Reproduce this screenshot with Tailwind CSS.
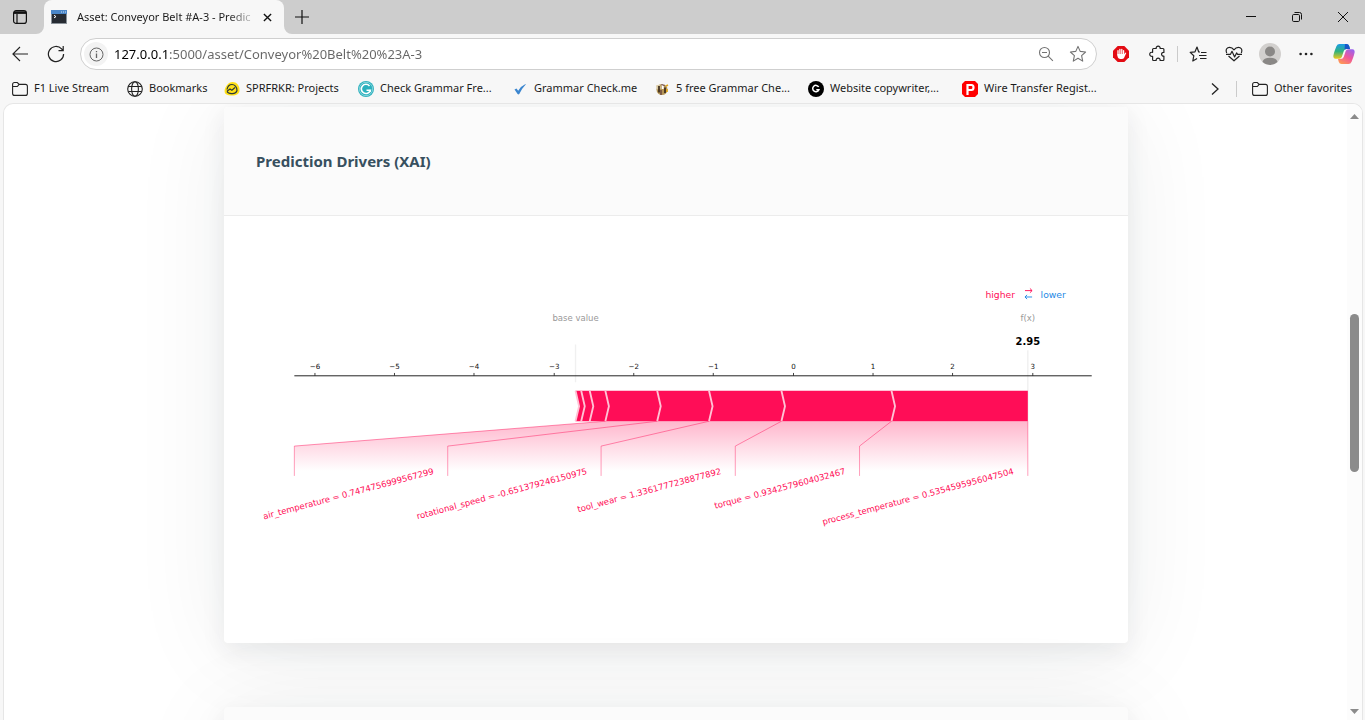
<!DOCTYPE html>
<html lang="en">
<head>
<meta charset="utf-8">
<meta name="viewport" content="width=device-width, initial-scale=1">
<title>Asset: Conveyor Belt #A-3</title>
<script src="https://cdn.jsdelivr.net/npm/@tailwindcss/browser@4"></script>
</head>
<body class="flex h-screen flex-col overflow-hidden bg-[#f7f7f7] font-['Noto_Sans','Open_Sans',sans-serif] text-[11px] text-[#1b1b1b]">

<!-- Tab strip -->
<header class="flex h-[34px] shrink-0 items-stretch bg-[#cdcdcd]">
  <button aria-label="Tab actions" class="flex w-[44px] items-center rounded-br-lg pl-3">
    <svg class="size-4" viewBox="0 0 16 16" fill="none" stroke="#111" stroke-width="1.2"><rect x="1.6" y="1.6" width="12.8" height="12.8" rx="2.5"/><path d="M2 3.600h12" stroke-width="2.600"/><path d="M5 5v9"/></svg>
  </button>
  <div class="relative flex w-[240px] items-center rounded-t-lg bg-[#f7f7f7] pr-[5px] pl-[7px]">
    <svg class="absolute bottom-0 -left-2 size-2" viewBox="0 0 8 8"><path d="M8 0v8H0a8 8 0 0 0 8-8z" fill="#f7f7f7"/></svg>
    <svg class="absolute -right-2 bottom-0 size-2" viewBox="0 0 8 8"><path d="M0 0v8h8a8 8 0 0 1-8-8z" fill="#f7f7f7"/></svg>
    <svg class="size-4 shrink-0" viewBox="0 0 16 16"><rect y="1" width="16" height="14" rx=".6" fill="#8a9299"/><rect y="1" width="16" height="4" fill="#4a86c8"/><path d="M10 3h1M12 3h1M14 3h1" stroke="#cfe0f2"/><rect x="1" y="5" width="14" height="9" fill="#272c33"/><path d="M3 6.300l2 1.300-2 1.300" fill="none" stroke="#fff"/></svg>
    <span class="ml-[10px] w-[178px] overflow-hidden bg-linear-to-r from-[#1b1b1b] from-85% to-[#1b1b1b]/10 bg-clip-text whitespace-nowrap text-transparent">Asset: Conveyor Belt #A-3 - Predic</span>
    <button aria-label="Close tab" class="ml-auto flex size-6 items-center justify-center"><svg class="size-[9px]" viewBox="0 0 10 10" stroke="#111" stroke-width="1.500"><path d="M1 1l8 8M9 1L1 9"/></svg></button>
  </div>
  <button aria-label="New tab" class="flex w-9 items-center justify-center"><svg class="size-4" viewBox="0 0 16 16" stroke="#111" stroke-width="1.2"><path d="M8 1v14M1 8h14"/></svg></button>
  <div class="-mr-px ml-auto flex">
    <button aria-label="Minimize" class="flex w-[46px] items-center justify-center"><svg class="size-[10px]" viewBox="0 0 10 10" stroke="#111"><path d="M0 4.500h10"/></svg></button>
    <button aria-label="Restore" class="flex w-[46px] items-center justify-center"><svg class="size-[10px]" viewBox="0 0 10 10" fill="none" stroke="#111"><rect x=".5" y="2.500" width="7" height="7" rx="1.200"/><path d="M2.500.5h5a2 2 0 0 1 2 2v5"/></svg></button>
    <button aria-label="Close" class="flex w-[46px] items-center justify-center"><svg class="size-[10px]" viewBox="0 0 10 10" stroke="#111"><path d="M0 0l10 10M10 0L0 10"/></svg></button>
  </div>
</header>

<!-- Address bar -->
<nav aria-label="Toolbar" class="flex h-[40px] shrink-0 items-center pr-[3px] pl-[2px]">
  <button aria-label="Back" class="flex w-9 justify-center"><svg class="size-4" viewBox="0 0 16 16" fill="none" stroke="#222" stroke-width="1.1"><path d="M16 8H1M8 1L.9 8 8 15"/></svg></button>
  <button aria-label="Refresh" class="flex w-9 justify-center"><svg class="size-[18px]" viewBox="0 0 18 18" fill="none" stroke="#222" stroke-width="1.2"><path d="M16.600 9A7.600 7.600 0 1 1 14.600 3.900L16 5.500M16.200 1v4.700h-4.700"/></svg></button>
  <div class="ml-[6px] flex h-8 flex-1 items-center rounded-full border border-[#cfcfcf] bg-white px-[3px]">
    <button aria-label="Site information" class="flex size-6 items-center justify-center rounded-full bg-[#f3f3f3]"><svg class="size-[15px]" viewBox="0 0 15 15" fill="none" stroke="#666"><circle cx="7.500" cy="7.500" r="6.500"/><path d="M7.500 6.500v4.500M7.500 4v1.300" stroke-width="1.300"/></svg></button>
    <label for="url" class="flex flex-1 pl-[6px]"><span class="hidden">Address</span>
      <input id="url" aria-label="Address" value="127.0.0.1:5000/asset/Conveyor%20Belt%20%23A-3" class="h-6 w-full bg-linear-to-r from-black from-[54px] to-[#666] to-[54px] bg-clip-text text-[13px] text-transparent outline-none">
    </label>
    <button aria-label="Zoom" class="flex w-7 justify-center"><svg class="size-4" viewBox="0 0 16 16" fill="none" stroke="#737373" stroke-width="1.1"><circle cx="6.500" cy="6.500" r="5"/><path d="M10.200 10.200l4.700 4.700M4 6.500h5"/></svg></button>
    <button aria-label="Add to favorites" class="-mr-[3px] flex w-9 justify-center"><svg class="size-[18px]" viewBox="0 0 18 18" fill="none" stroke="#737373" stroke-width="1.1" stroke-linejoin="round"><path d="M9 1.400l2.200 5 5.400.6-4 3.600 1.100 5.500L9 13.300l-4.700 2.800 1.100-5.500-4-3.600 5.400-.6z"/></svg></button>
  </div>
  <button aria-label="Ad blocker" class="ml-[6px] flex w-9 justify-center"><svg class="size-4" viewBox="0 0 16 16"><path d="M4.700 0h6.600L16 4.700v6.600L11.300 16H4.700L0 11.300V4.700z" fill="#e30b13"/><path d="M5 9V4.700M6.900 8V3.400M8.800 8V3.400M10.600 9V4.700" stroke="#fff" stroke-width="1.300" stroke-linecap="round"/><path d="M4.400 8h6.900l1.100-1.600.9.500L11 12c-.8 1.300-4.700 1.400-5.700 0C4.500 11 4.400 9.500 4.400 8z" fill="#fff"/></svg></button>
  <button aria-label="Extensions" class="flex w-9 justify-center"><svg class="size-[18px]" viewBox="0 0 18 18" fill="none" stroke="#222" stroke-width="1.2" stroke-linejoin="round"><path d="M5.500 3.500h2.700a2 2 0 1 1 3.900 0h2.900q.9 0 .9.900v3a1.900 1.900 0 1 0 0 3.700v3.500q0 .9-.9.900h-2.900a2 2 0 1 0-3.900 0H5.500q-.9 0-.9-.9v-3.300a2.100 2.100 0 1 1 0-3.900v-3q0-.9.900-.9z"/></svg></button>
  <span class="mx-[2px] h-4 w-px bg-[#cbcbcb]"></span>
  <button aria-label="Favorites" class="flex w-9 justify-center"><svg class="size-[18px]" viewBox="0 0 18 18" fill="none" stroke="#222" stroke-width="1.2" stroke-linejoin="round"><path d="M11 7H9.700L8 2 6 6.800l-4.800.6 3.600 3.400-1 5.200 4.300-2.500M12 7.500h5.500M10 10.500h7.500M11 13.500h6.500"/></svg></button>
  <button aria-label="Browser essentials" class="flex w-9 justify-center"><svg class="size-[18px]" viewBox="0 0 18 18" fill="none" stroke="#222" stroke-width="1.200" stroke-linejoin="round"><path d="M1.700 8C.2 4.300 2.200 2.300 4.600 2.300c2 0 3.300 1 4.400 2.500 1.100-1.500 2.400-2.500 4.400-2.500 2.400 0 4.400 2 2.900 5.700M3.500 11L9 15.800 14.500 11"/><path d="M1 9.300h4.500L7 6.300l2.600 5.600 2-4 1 1.400H17"/></svg></button>
  <button aria-label="Profile" class="flex w-9 justify-center"><svg class="size-[22px]" viewBox="0 0 22 22"><circle cx="11" cy="11" r="11" fill="#d2d0ce"/><circle cx="11" cy="8.500" r="5" fill="#8a8886"/><path d="M3.500 19a7.600 5 0 0 1 15 0A11 11 0 0 1 3.500 19z" fill="#8a8886"/></svg></button>
  <button aria-label="Settings and more" class="flex w-9 justify-center"><svg class="h-1 w-[14px]" viewBox="0 0 14 4" fill="#222"><circle cx="1.600" cy="2" r="1.300"/><circle cx="7" cy="2" r="1.300"/><circle cx="12.400" cy="2" r="1.300"/></svg></button>
  <button aria-label="Copilot" class="ml-[2px] flex w-9 justify-center"><svg class="size-[22px]" viewBox="0 0 22 22">
    <defs><linearGradient id="ca" x1="0" y1="0" x2="0" y2="1"><stop offset="0" stop-color="#1b9de8"/><stop offset=".5" stop-color="#31b27c"/><stop offset="1" stop-color="#f2c81b"/></linearGradient><linearGradient id="cb" x1=".8" y1="0" x2=".2" y2="1"><stop offset="0" stop-color="#9a63ee"/><stop offset=".5" stop-color="#f0569a"/><stop offset="1" stop-color="#ff9b51"/></linearGradient></defs>
    <path d="M6.500 1h7q2 0 2.700 2l.8 3h-3.500q-2 0-2.700 2l-2 6q-.7 1.800-2.500 1.800H2.500Q0 15.500.4 12.500C1 9 2.500 5.500 3.400 3.200Q4.300 1 6.500 1z" fill="url(#ca)"/>
    <path d="M12 1h1.500q2 0 2.700 2l.8 3h-3.500q-1.300 0-2 .8z" fill="#1757c9"/>
    <path d="M15.500 21h-7q-2 0-2.700-2L5 16h2.500q2.500 0 3.200-2l2-6q.7-1.800 2.800-1.800h4Q22 6.500 21.600 9.500c-.6 3.500-2.100 7-3 9.300Q17.700 21 15.500 21z" fill="url(#cb)"/></svg></button>
</nav>

<!-- Favorites bar -->
<nav aria-label="Favorites bar" class="flex h-[29px] shrink-0 items-center pr-[13px] pl-3 whitespace-nowrap">
  <a href="#" class="flex w-[115px] items-center gap-[6px]"><svg class="size-4" viewBox="0 0 16 16" fill="none" stroke="#222" stroke-width="1.1"><path d="M.6 3.500q0-2 2-2h2.700L7.200 3.400h6.200q2 0 2 2v7q0 2-2 2H2.600q-2 0-2-2zM.6 5.500h4.700l1.900-2.100"/></svg>F1 Live Stream</a>
  <a href="#" class="flex w-[97px] items-center gap-[6px]"><svg class="size-4" viewBox="0 0 16 16" fill="none" stroke="#222" stroke-width="1.1"><circle cx="8" cy="8" r="7.300"/><ellipse cx="8" cy="8" rx="3.400" ry="7.300"/><path d="M1.300 5.500h13.400M1.300 10.500h13.400"/></svg>Bookmarks</a>
  <a href="#" class="flex w-[134px] items-center gap-[6px]"><svg class="size-4" viewBox="0 0 16 16"><path d="M8.500 1C12.500 1 15.500 4.500 15.500 9c0 4-3 5.500-7.500 5.500S.6 13.500.6 10C.6 6 4.500 1 8.500 1z" fill="#ffe016"/><path d="M3 10.500C4.500 13.500 12 13.500 13 9.500 13 6 10.500 3.500 8 3.500S3.600 5.500 3 8.500M3 10.200L6 7.900l1.900 1.400L11 6.500" fill="none" stroke="#2b3a3a" stroke-width="1.200"/></svg>SPRFRKR: Projects</a>
  <a href="#" class="flex w-[154px] items-center gap-[6px]"><svg class="size-4" viewBox="0 0 16 16" fill="none"><circle cx="8" cy="8" r="8" fill="#2ab0bd"/><circle cx="8" cy="8" r="6.700" stroke="#bfe9ed" stroke-width=".6"/><path d="M11.500 5A4.600 4.600 0 1 0 12.300 9.300H8.500M11 8.700L12.600 11" stroke="#fff" stroke-width="1.600"/></svg>Check Grammar Fre...</a>
  <a href="#" class="flex w-[142px] items-center gap-[6px]"><svg class="size-4" viewBox="0 0 16 16"><path d="M2.500 8.500l2-1 1.700 2.200Q9 5 13.500 3q.5.300 0 .8Q9.500 8 7.300 13q-1 .8-1.700 0z" fill="#3b86cf"/></svg>Grammar Check.me</a>
  <a href="#" class="flex w-[154px] items-center gap-[6px]"><svg class="size-4" viewBox="0 0 16 16"><circle cx="8" cy="8.500" r="5.500" fill="#b59658"/><path d="M2 4.500l4-1 1 4-4 1z" fill="#d9c8a0"/><path d="M5 5v6.500M11 6.500v5.500" stroke="#3c2c1b" stroke-width="1.700"/><path d="M8.700 3v5" stroke="#fff" stroke-width="2"/><path d="M7 9v5M7.500 3.500l3 1" stroke="#633c3c" stroke-width="1.300"/><path d="M12 5l2-1M13 8v3" stroke="#e1a61b" stroke-width="1.700"/></svg>5 free Grammar Che...</a>
  <a href="#" class="flex w-[154px] items-center gap-[6px]"><svg class="size-4" viewBox="0 0 16 16" fill="none"><circle cx="8" cy="8" r="8" fill="#000"/><path d="M10.700 6A3.200 3.200 0 1 0 10.900 8.700H8.300" stroke="#fff" stroke-width="1.500"/></svg>Website copywriter,...</a>
  <a href="#" class="flex items-center gap-[6px]"><svg class="size-4" viewBox="0 0 16 16" fill="none"><path d="M3 0h10l3 3v10l-3 3H3l-3-3V3z" fill="#f00"/><path d="M5.500 14V4h4q2 0 2 2.500T9.500 9h-4" stroke="#fff" stroke-width="2.200"/></svg>Wire Transfer Regist...</a>
  <div class="ml-auto flex items-center">
    <button aria-label="More favorites" class="mr-[17px]"><svg class="h-3 w-2" viewBox="0 0 8 12" fill="none" stroke="#222" stroke-width="1.300"><path d="M1 .6L7 6l-6 5.400"/></svg></button>
    <span class="mr-[15px] h-4 w-px bg-[#cbcbcb]"></span>
    <a href="#" class="flex items-center gap-[6px]"><svg class="size-4" viewBox="0 0 16 16" fill="none" stroke="#222" stroke-width="1.1"><path d="M.6 3.500q0-2 2-2h2.700L7.200 3.400h6.200q2 0 2 2v7q0 2-2 2H2.600q-2 0-2-2zM.6 5.500h4.700l1.900-2.100"/></svg>Other favorites</a>
  </div>
</nav>

<!-- Page viewport -->
<div class="mr-[2px] ml-[3px] flex min-h-0 flex-1 overflow-hidden rounded-t-[10px] border border-b-0 border-[#e6e6e6] bg-white">
  <main class="min-w-0 flex-1 overflow-hidden pt-[3px] pl-px">
    <section class="mx-auto mb-16 max-w-[904px] rounded bg-white shadow-[0_8px_24px_rgba(33,43,54,0.08),0_8px_100px_rgba(33,37,41,0.07)]">
      <header class="flex h-[109px] items-center rounded-t border-b border-[#ececec] bg-[#fbfbfb] px-8">
        <h2 class="text-[15px] font-bold text-[#37505f]">Prediction Drivers (XAI)</h2>
      </header>
      <div class="p-8">
        <svg class="block w-full font-['DejaVu_Sans',sans-serif]" viewBox="0 0 1183 511" role="img" aria-label="Feature contributions, force plot">
          <defs>
            <linearGradient id="fade" gradientUnits="userSpaceOnUse" x1="0" y1="244" x2="0" y2="314"><stop offset="0" stop-color="#ff0d57" stop-opacity=".3"/><stop offset="1" stop-color="#ff0d57" stop-opacity="0"/></linearGradient>
          </defs>
          <!-- legend and headings -->
          <g font-size="13"><text x="1069" y="71" text-anchor="end" fill="#ff0d57">higher</text><text x="1105" y="71" fill="#1e88e5">lower</text></g>
          <path d="M1083 60h10M1090 57l3 3-3 3" fill="none" stroke="#ff0d57" stroke-width="1.300"/>
          <path d="M1093 69h-10M1086 66l-3 3 3 3" fill="none" stroke="#1e88e5" stroke-width="1.300"/>
          <g font-size="12" fill="#999" text-anchor="middle"><text x="450" y="103">base value</text><text x="1087" y="103">f(x)</text></g>
          <text x="1087" y="137" font-size="14" font-weight="bold" text-anchor="middle">2.95</text>
          <path d="M450 136v53M1087 144v100" stroke="#f0f0f0" stroke-width="2"/>
          <!-- axis -->
          <path d="M54 180H1177" stroke="#222" stroke-width="1.400"/>
          <path d="M83 180v-4M195 180v-4M307 180v-4M420 180v-4M532 180v-4M644 180v-4M757 180v-4M869 180v-4M981 180v-4M1094 180v-4" stroke="#222" stroke-width="1.200"/>
          <g font-size="10" fill="#111" text-anchor="middle">
            <text x="83" y="171">−6</text><text x="195" y="171">−5</text><text x="307" y="171">−4</text><text x="420" y="171">−3</text><text x="532" y="171">−2</text><text x="644" y="171">−1</text><text x="757" y="171">0</text><text x="869" y="171">1</text><text x="981" y="171">2</text><text x="1094" y="171">3</text>
          </g>
          <!-- force bar -->
          <path d="M450 201H1087V244H450l5-21z" fill="#ff0d57"/>
          <path d="M450 201l5 22-5 21M458 201l5 22-5 21M470 201l5 22-5 21M492 201l5 22-5 21M565 201l5 22-5 21M638 201l5 22-5 21M740 201l5 22-5 21M895 201l5 22-5 21" fill="none" stroke="#ffc3d5" stroke-width="2.600"/>
          <!-- leaders -->
          <path d="M54 279L492 244H1087V321H54z" fill="url(#fade)"/>
          <path d="M54 279L492 244M270 279L565 244M486 279L638 244M675 279L740 244M850 279L895 244" stroke="#ff0d57" stroke-opacity=".45" stroke-width="1.400" fill="none"/>
          <path d="M54 279v42M270 279v42M486 279v42M675 279v42M850 279v42M1087 244v77" stroke="#ff0d57" stroke-opacity=".4" stroke-width="1.400"/>
          <g font-size="12" fill="#ff0d57" text-anchor="end">
            <text transform="translate(251 318) rotate(-15)">air_temperature = 0.7474756999567299</text>
            <text transform="translate(467 318) rotate(-15)">rotational_speed = -0.651379246150975</text>
            <text transform="translate(656 318) rotate(-15)">tool_wear = 1.3361777238877892</text>
            <text transform="translate(831 318) rotate(-15)">torque = 0.9342579604032467</text>
            <text transform="translate(1068 318) rotate(-15)">process_temperature = 0.5354595956047504</text>
          </g>
        </svg>
      </div>
    </section>
    <section class="mx-auto h-[109px] max-w-[904px] rounded bg-[#fbfbfb] shadow-[0_8px_24px_rgba(33,43,54,0.08),0_8px_100px_rgba(33,37,41,0.07)]"></section>
  </main>
  <!-- Scrollbar -->
  <div class="flex w-[15px] shrink-0 flex-col items-center bg-[#fcfcfc] pt-[10px] pb-[6px]">
    <svg class="h-[5px] w-[9px]" viewBox="0 0 9 5"><path d="M4.500 0L9 5H0z" fill="#8b8b8b"/></svg>
    <div class="mt-[195px] h-[158px] w-[9px] rounded-full bg-[#8b8b8b]"></div>
    <svg class="mt-auto h-[5px] w-[9px]" viewBox="0 0 9 5"><path d="M4.500 5L9 0H0z" fill="#8b8b8b"/></svg>
  </div>
</div>
</body>
</html>
